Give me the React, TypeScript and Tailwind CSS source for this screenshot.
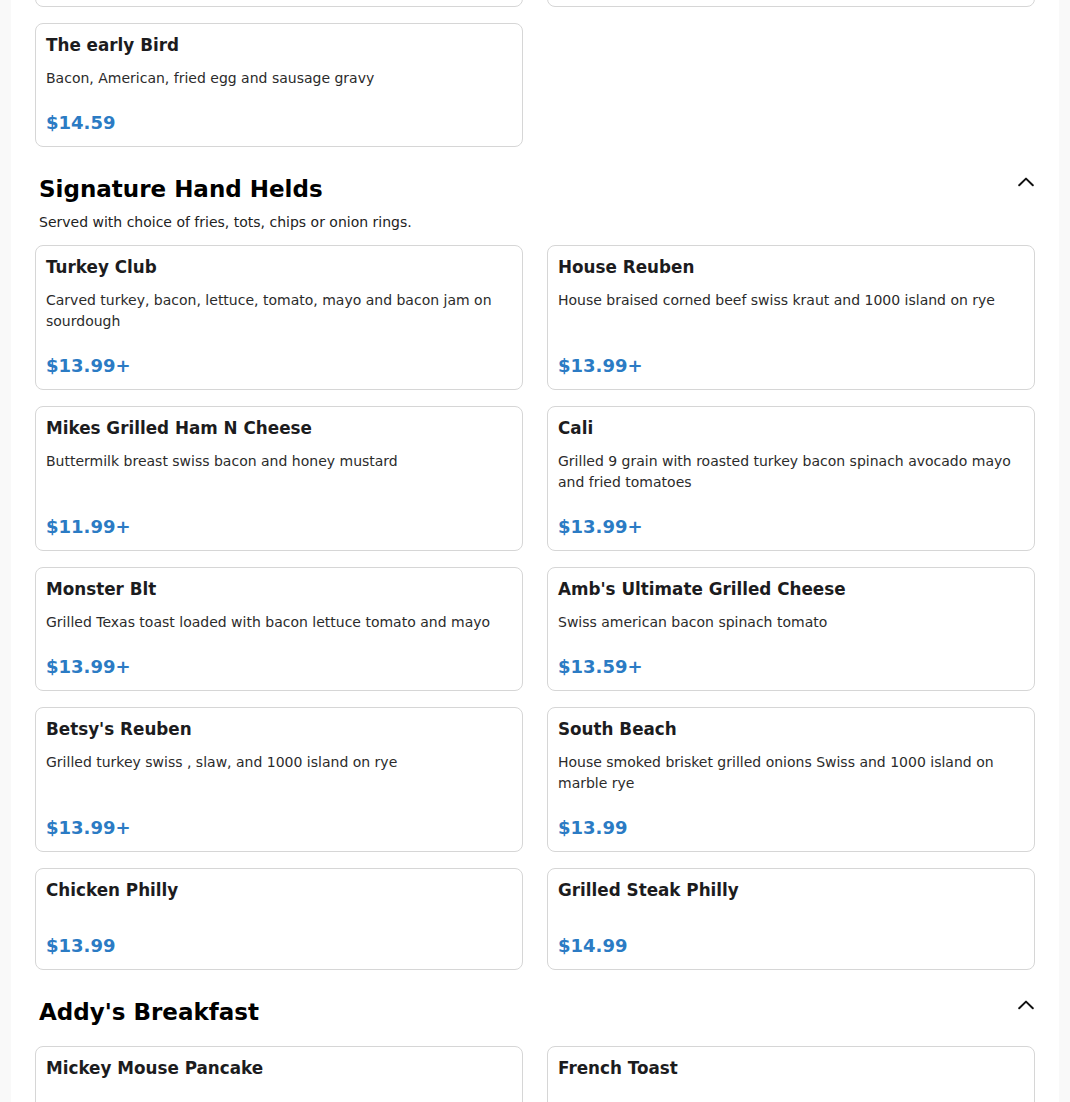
type Item = { name: string; desc?: string; price: string }

type Section = { title: string; subtitle?: string; items: Item[] }

const sections: Section[] = [
  {
    title: 'Signature Hand Helds',
    subtitle: 'Served with choice of fries, tots, chips or onion rings.',
    items: [
      { name: 'Turkey Club', desc: 'Carved turkey, bacon, lettuce, tomato, mayo and bacon jam on sourdough', price: '$13.99+' },
      { name: 'House Reuben', desc: 'House braised corned beef swiss kraut and 1000 island on rye', price: '$13.99+' },
      { name: 'Mikes Grilled Ham N Cheese', desc: 'Buttermilk breast swiss bacon and honey mustard', price: '$11.99+' },
      { name: 'Cali', desc: 'Grilled 9 grain with roasted turkey bacon spinach avocado mayo and fried tomatoes', price: '$13.99+' },
      { name: 'Monster Blt', desc: 'Grilled Texas toast loaded with bacon lettuce tomato and mayo', price: '$13.99+' },
      { name: "Amb's Ultimate Grilled Cheese", desc: 'Swiss american bacon spinach tomato', price: '$13.59+' },
      { name: "Betsy's Reuben", desc: 'Grilled turkey swiss , slaw, and 1000 island on rye', price: '$13.99+' },
      { name: 'South Beach', desc: 'House smoked brisket grilled onions Swiss and 1000 island on marble rye', price: '$13.99' },
      { name: 'Chicken Philly', price: '$13.99' },
      { name: 'Grilled Steak Philly', price: '$14.99' },
    ],
  },
  {
    title: "Addy's Breakfast",
    items: [
      { name: 'Mickey Mouse Pancake', price: '$6.99' },
      { name: 'French Toast', price: '$9.99' },
    ],
  },
]

const Chevron = () => (
  <svg width="16" height="10" viewBox="0 0 16 10" fill="none" className="mt-[2px] -mr-[3px] shrink-0">
    <path d="M1.2 8.2 8 1.6 14.8 8.2" stroke="#111" strokeWidth="2" strokeLinecap="round" strokeLinejoin="round" />
  </svg>
)

const Card = ({ item }: { item: Item }) => (
  <div className="flex flex-col rounded-lg border border-[#d6d6d6] bg-white px-2.5 pt-[9px] pb-[10px]">
    <h3 className="text-[16.8px] font-bold leading-6 text-[#1c1c1e]">{item.name}</h3>
    <p className={`${item.desc ? 'mt-[11px]' : 'mt-[10px]'} text-sm leading-[21px] text-[#2b2b2b]`}>{item.desc}</p>
    <div className="mt-auto pt-[20px] text-[18px] font-bold leading-[27px] text-[#2b7bc4]">{item.price}</div>
  </div>
)

export default function App() {
  return (
    <div className="min-h-screen bg-[#f9f9f9] px-[11px] font-['DejaVu_Sans',sans-serif]">
      <div className="-mt-[123px] bg-white px-6 pb-10">
        <div className="grid grid-cols-2 gap-x-6 gap-y-4">
          <div className="h-[130px] rounded-lg border border-[#d6d6d6]" />
          <div className="h-[130px] rounded-lg border border-[#d6d6d6]" />
          <Card item={{ name: 'The early Bird', desc: 'Bacon, American, fried egg and sausage gravy', price: '$14.59' }} />
        </div>
        {sections.map((s) => (
          <section key={s.title} className="mt-7">
            <div className="flex items-start justify-between px-1">
              <h2 className="text-[23px] font-bold leading-7 text-black">{s.title}</h2>
              <Chevron />
            </div>
            {s.subtitle && <p className="mt-[9px] px-1 text-sm leading-[21px] text-[#222]">{s.subtitle}</p>}
            <div className={`grid grid-cols-2 gap-x-6 gap-y-4 ${s.subtitle ? 'mt-[12px]' : 'mt-[20px]'}`}>
              {s.items.map((it) => (
                <Card key={it.name} item={it} />
              ))}
            </div>
          </section>
        ))}
      </div>
    </div>
  )
}
